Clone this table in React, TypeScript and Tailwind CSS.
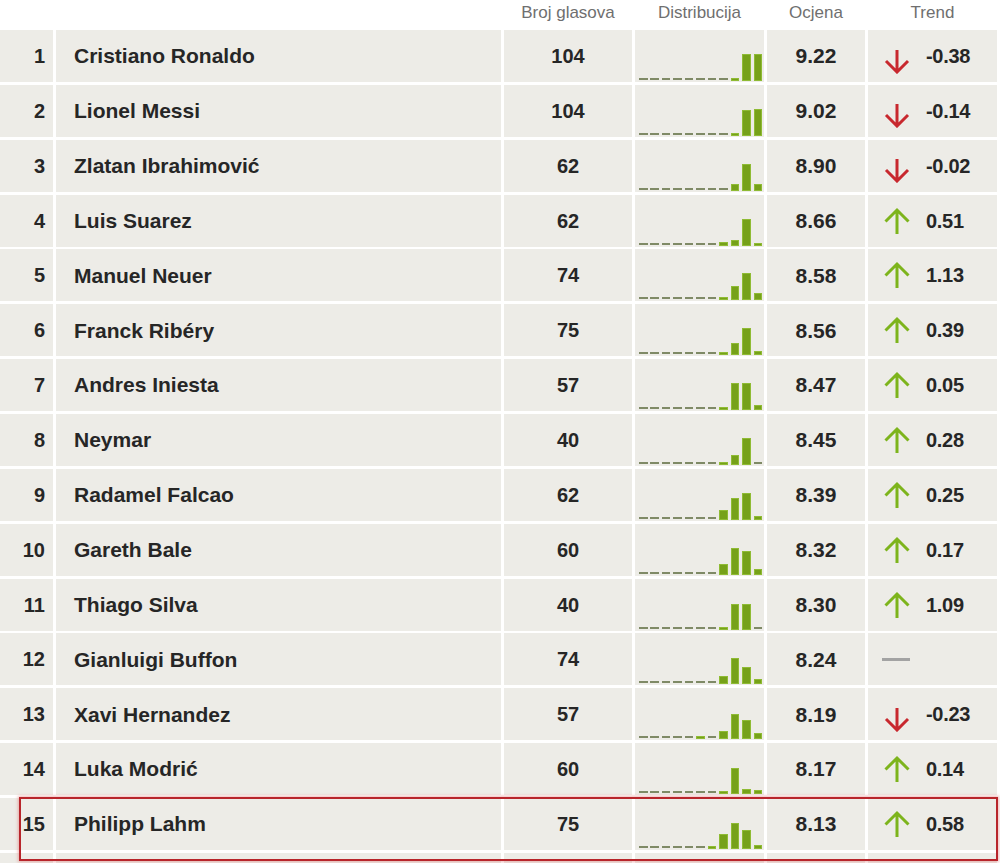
import React from 'react';

type Trend = 'up' | 'down' | 'flat';

interface Player {
  rank: number;
  name: string;
  votes: number;
  dist: number[];
  score: string;
  trend: Trend;
  delta?: string;
}

// dist = bar height in px for each grade 0..10, 0 means no votes (dash)
const players: Player[] = [
  { rank: 1, name: 'Cristiano Ronaldo', votes: 104, dist: [0, 0, 0, 0, 0, 0, 0, 0, 3, 27, 27], score: '9.22', trend: 'down', delta: '-0.38' },
  { rank: 2, name: 'Lionel Messi', votes: 104, dist: [0, 0, 0, 0, 0, 0, 0, 0, 3, 26, 27], score: '9.02', trend: 'down', delta: '-0.14' },
  { rank: 3, name: 'Zlatan Ibrahimović', votes: 62, dist: [0, 0, 0, 0, 0, 0, 0, 0, 7, 27, 7], score: '8.90', trend: 'down', delta: '-0.02' },
  { rank: 4, name: 'Luis Suarez', votes: 62, dist: [0, 0, 0, 0, 0, 0, 0, 4, 6, 27, 3], score: '8.66', trend: 'up', delta: '0.51' },
  { rank: 5, name: 'Manuel Neuer', votes: 74, dist: [0, 0, 0, 0, 0, 0, 0, 3, 14, 27, 7], score: '8.58', trend: 'up', delta: '1.13' },
  { rank: 6, name: 'Franck Ribéry', votes: 75, dist: [0, 0, 0, 0, 0, 0, 0, 3, 12, 27, 4], score: '8.56', trend: 'up', delta: '0.39' },
  { rank: 7, name: 'Andres Iniesta', votes: 57, dist: [0, 0, 0, 0, 0, 0, 0, 3, 27, 27, 5], score: '8.47', trend: 'up', delta: '0.05' },
  { rank: 8, name: 'Neymar', votes: 40, dist: [0, 0, 0, 0, 0, 0, 0, 3, 10, 27, 0], score: '8.45', trend: 'up', delta: '0.28' },
  { rank: 9, name: 'Radamel Falcao', votes: 62, dist: [0, 0, 0, 0, 0, 0, 0, 10, 22, 27, 4], score: '8.39', trend: 'up', delta: '0.25' },
  { rank: 10, name: 'Gareth Bale', votes: 60, dist: [0, 0, 0, 0, 0, 0, 0, 11, 27, 24, 6], score: '8.32', trend: 'up', delta: '0.17' },
  { rank: 11, name: 'Thiago Silva', votes: 40, dist: [0, 0, 0, 0, 0, 0, 0, 3, 26, 26, 0], score: '8.30', trend: 'up', delta: '1.09' },
  { rank: 12, name: 'Gianluigi Buffon', votes: 74, dist: [0, 0, 0, 0, 0, 0, 0, 8, 26, 17, 5], score: '8.24', trend: 'flat' },
  { rank: 13, name: 'Xavi Hernandez', votes: 57, dist: [0, 0, 0, 0, 0, 3, 0, 8, 25, 19, 6], score: '8.19', trend: 'down', delta: '-0.23' },
  { rank: 14, name: 'Luka Modrić', votes: 60, dist: [0, 0, 0, 0, 0, 0, 0, 3, 26, 5, 4], score: '8.17', trend: 'up', delta: '0.14' },
  { rank: 15, name: 'Philipp Lahm', votes: 75, dist: [0, 0, 0, 0, 0, 0, 3, 15, 26, 19, 4], score: '8.13', trend: 'up', delta: '0.58' },
];

function ArrowUp() {
  return (
    <svg width="30" height="28" viewBox="0 0 30 28" className="shrink-0">
      <path d="M15 3 V27 M3.5 14.5 L15 3 L26.5 14.5" fill="none" stroke="#7db41c" strokeWidth="3" />
    </svg>
  );
}

function ArrowDown() {
  return (
    <svg width="30" height="24" viewBox="0 0 30 24" className="shrink-0 mt-[11px]">
      <path d="M15 0 V22 M4 11 L15 22 L26 11" fill="none" stroke="#c8282e" strokeWidth="3" />
    </svg>
  );
}

function Distribution({ dist }: { dist: number[] }) {
  return (
    <div className="flex items-end h-full pl-[4px] pb-[1px]">
      {dist.map((h, i) => (
        <div key={i} className="w-[11.47px] shrink-0 flex items-end">
          {h === 0 ? (
            <div className="w-[8.5px] h-[2px] mb-[1px] bg-[#7f8a66]" />
          ) : (
            <div className="w-[8.3px] bg-[#76a11a] border border-[#8fbb34]" style={{ height: h }} />
          )}
        </div>
      ))}
    </div>
  );
}

function Row({ p }: { p: Player }) {
  return (
    <div className="flex gap-[3px] h-[52px] shrink-0 text-[#262626] font-bold">
      <div className="w-[53px] bg-[#edece7] flex items-center justify-end pr-[8px] text-[20px]">{p.rank}</div>
      <div className="w-[445px] bg-[#edece7] flex items-center pl-[18px] text-[21px]">{p.name}</div>
      <div className="w-[128px] bg-[#edece7] flex items-center justify-center text-[20px]">{p.votes}</div>
      <div className="w-[129px] bg-[#edece7]">
        <Distribution dist={p.dist} />
      </div>
      <div className="w-[98px] bg-[#edece7] flex items-center justify-center text-[21px]">{p.score}</div>
      <div className="w-[129px] bg-[#edece7] flex items-center pl-[14px] text-[20px]">
        {p.trend === 'up' && <ArrowUp />}
        {p.trend === 'down' && <ArrowDown />}
        {p.trend === 'flat' && <div className="w-[28px] h-[3px] bg-[#a3a3a3]" />}
        {p.delta && <span className="ml-[14px] tracking-[-0.3px]">{p.delta}</span>}
      </div>
    </div>
  );
}

export default function App() {
  return (
    <div className="relative w-[1000px] h-[863px] overflow-hidden bg-white font-['Liberation_Sans',Arial,sans-serif]">
      {/* Header */}
      <div className="flex gap-[3px] h-[27px] pb-[2px] items-center text-[17px] text-[#6f6f6f]">
        <div className="w-[53px]" />
        <div className="w-[445px]" />
        <div className="w-[128px] text-center">Broj glasova</div>
        <div className="w-[129px] text-center">Distribucija</div>
        <div className="w-[98px] text-center">Ocjena</div>
        <div className="w-[129px] text-center">Trend</div>
      </div>

      {/* Rows */}
      <div className="flex flex-col gap-[2.86px] mt-[3px]">
        {players.map(p => (
          <Row key={p.rank} p={p} />
        ))}
        {/* next row, cut off by the bottom edge */}
        <div className="flex gap-[3px] h-[52px] shrink-0">
          <div className="w-[53px] bg-[#edece7]" />
          <div className="w-[445px] bg-[#edece7]" />
          <div className="w-[128px] bg-[#edece7]" />
          <div className="w-[129px] bg-[#edece7]" />
          <div className="w-[98px] bg-[#edece7]" />
          <div className="w-[129px] bg-[#edece7]" />
        </div>
      </div>

      {/* Highlight frame */}
      <div className="absolute left-[19px] top-[797px] w-[979px] h-[64px] border-2 border-[#b8252b] shadow-[0_0_3px_1px_rgba(220,90,90,0.45)] pointer-events-none" />
    </div>
  );
}
